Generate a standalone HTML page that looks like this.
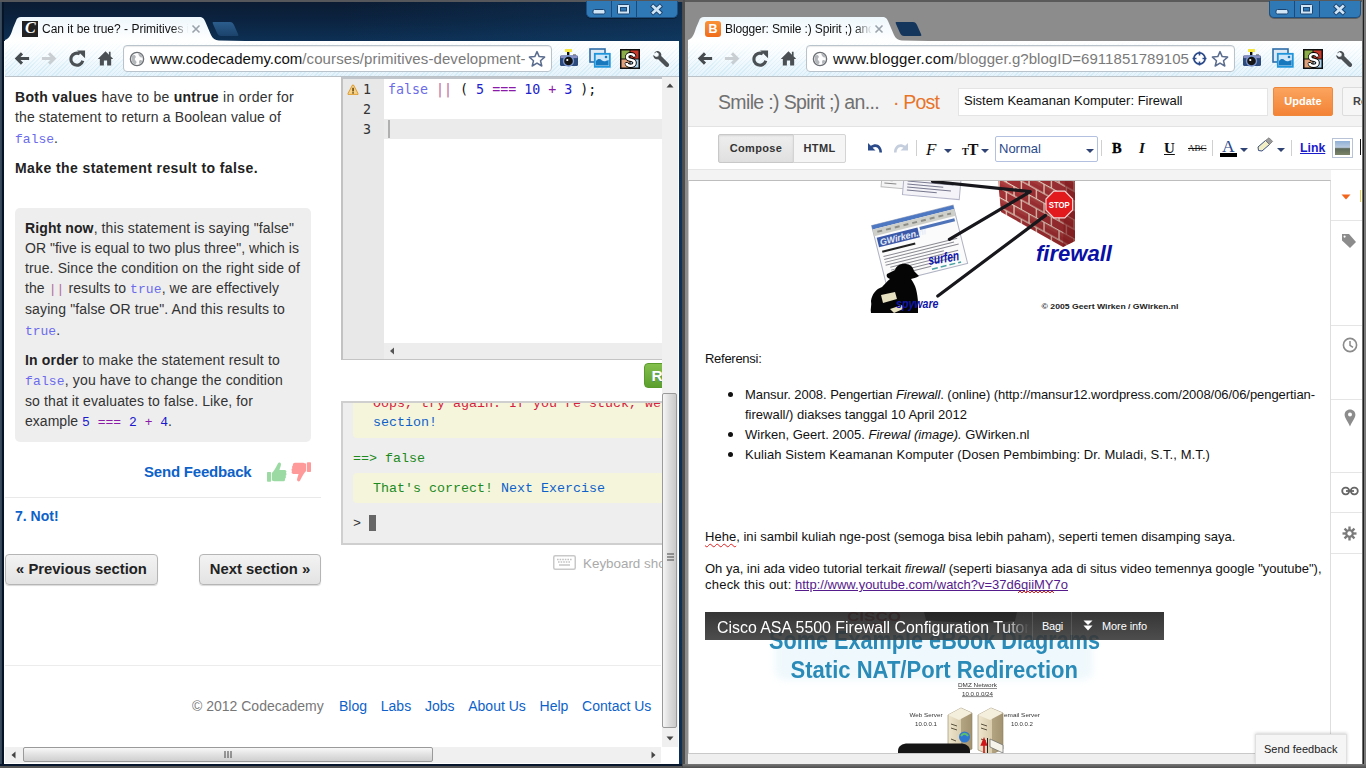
<!DOCTYPE html>
<html lang="en">
<head>
<meta charset="utf-8">
<title>Desktop</title>
<style>
*{box-sizing:border-box;margin:0;padding:0}
html,body{width:1366px;height:768px;overflow:hidden;background:#0b1f3c;font-family:"Liberation Sans",sans-serif;}
.abs{position:absolute}
.win{position:absolute;top:0;width:683px;height:768px;overflow:hidden}
#w1{left:0;background:#0b213f}
#w2{left:683px;background:#8a8a8a}
/* frame */
#w1 .frame{position:absolute;left:0;top:0;width:683px;height:768px;background:linear-gradient(90deg,rgba(20,70,115,0) 50%,rgba(20,70,115,.35) 100%),linear-gradient(#0b1b31 0,#0b2340 20px,#0d3054 41px,#0c2a4c 100px,#0b2444 100%);}
#w1 .frame:before{content:"";position:absolute;left:0;top:0;width:683px;height:2px;background:#55575a}
#w1 .edgeL{position:absolute;left:0;top:2px;width:4px;height:766px;background:linear-gradient(90deg,#46484b 0,#46484b 1.200px,#2a4a6c 1.200px,#1c3a5c 2.500px,#061428 2.500px)}
#w2 .frame{position:absolute;left:0;top:0;width:683px;height:768px;background:#8c8c8c}
#w2 .frame:before{content:"";position:absolute;left:0;top:0;width:683px;height:2px;background:#5a5a5a}
#w2 .edgeL{position:absolute;left:0;top:0;width:2px;height:768px;background:#4e4e4e}
#w2 .edgeR{position:absolute;left:679px;top:0;width:4px;height:768px;background:linear-gradient(90deg,#6e6e6e 0,#6e6e6e 1.5px,#1e1e1e 1.5px,#1e1e1e 2.5px,#7a7a7a 2.5px)}
#w2 .edgeB{position:absolute;left:0;top:764px;width:683px;height:5px;background:linear-gradient(#777 0,#444 100%)}
#w1 .edgeB{position:absolute;left:0;top:764px;width:683px;height:4px;background:linear-gradient(#061428 0,#0a1c34 2.500px,#555 2.500px)}
/* window controls */
.ctl{position:absolute;top:1px;left:586px;width:92px;height:17px;background:#2f79b7;border:1px solid #1d4f80;border-top:none;border-radius:0 0 5px 5px;box-shadow:0 1px 0 rgba(0,0,0,.3)}
.ctl i{position:absolute;top:0;width:1px;height:16px;background:#1c4a78}
.ctl i+b{}
.ctl svg{position:absolute;left:0;top:0}
/* tab strip */
.tab{position:absolute;left:5px;top:17px;width:214px;height:24px}
.tabtitle{position:absolute;left:42px;top:21px;font-size:12px;line-height:16px;color:#111;white-space:nowrap;width:146px;overflow:hidden;letter-spacing:0px;-webkit-mask-image:linear-gradient(90deg,#000 130px,transparent 147px);mask-image:linear-gradient(90deg,#000 130px,transparent 147px)}
.tabfade{display:none}
/* toolbar */
.tb{position:absolute;left:5px;top:41px;width:674px;height:36px;background:linear-gradient(#ffffff 0,#f8fcfe 40%,#e6f3fa 100%);border-bottom:1px solid #bcc3c8;overflow:hidden}
.stripes{position:absolute;left:0;top:0;width:100%;height:100%;background:repeating-linear-gradient(135deg,rgba(140,210,240,.2) 0,rgba(140,210,240,.2) 1px,rgba(255,255,255,0) 1px,rgba(255,255,255,0) 3px);-webkit-mask-image:linear-gradient(rgba(0,0,0,.05),#000 75%);}
.omni{position:absolute;left:118px;top:4px;width:429px;height:27px;background:#fff;border:1px solid #b9c3cb;border-radius:4px;box-shadow:inset 0 1px 1px rgba(0,0,0,.08)}
.url{position:absolute;left:26px;top:3px;font-size:15px;line-height:19px;white-space:nowrap;color:#111;overflow:hidden}
.url span{color:#7a7a7a}
.content{position:absolute;left:5px;top:77px;width:674px;height:686px;background:#fff;overflow:hidden}

/* ---- codecademy page ---- */
#c1{font-size:14px;line-height:20px;color:#333}
.l{position:absolute;white-space:nowrap;line-height:20px}
#bedit .l{line-height:16px;font-size:13px;color:#111}
#c1 b{color:#222}
#c1 code{font-family:"Liberation Mono",monospace;font-size:13px;color:#6b6bec}
#c1 code.op{color:#b06a9a}
#c1 code.num{color:#1a1acc}
#c1 code.eq{color:#8a1aa8}
a.lk{color:#0d62c9;text-decoration:none}
.hint{position:absolute;left:10px;top:131px;width:296px;height:234px;background:#eee;border-radius:5px}
.btn{position:absolute;top:477px;height:31px;border:1px solid #b5b5b5;border-radius:4px;background:linear-gradient(#f3f3f3,#e3e3e3);font-weight:bold;font-size:14.8px;line-height:29px;color:#222;text-align:center;box-shadow:0 1px 1px rgba(0,0,0,.15)}
.vsb{position:absolute;left:657px;top:0;width:16px;height:670px;background:#f0f0f0}
.vthumb{position:absolute;left:0;top:316px;width:15px;height:335px;border:1px solid #9a9a9a;border-radius:2px;background:linear-gradient(90deg,#f6f6f6 0,#dcdcdc 50%,#c9c9c9 100%)}
.hsb{position:absolute;left:0;top:670px;width:656px;height:16px;background:#f0f0f0}
.hthumb{position:absolute;left:18px;top:0;width:410px;height:15px;border:1px solid #9a9a9a;border-radius:2px;background:linear-gradient(#f8f8f8 0,#e2e2e2 50%,#cfcfcf 100%)}
/* editor */
.ed{position:absolute;left:336px;top:0;width:331px;height:283px;border:1px solid #c4c4c4;border-left:2px solid #c2c2c2;border-top:2px solid #bfc5ca;background:#fff;font-family:"DejaVu Sans Mono",monospace;font-size:13.3px;line-height:20px}
.gut{position:absolute;left:0;top:0;width:41px;height:280px;background:#e8e8e8}
.ln{position:absolute;left:0;width:28px;text-align:right;color:#333;font-size:13.3px}
.cons{position:absolute;left:336px;top:324px;width:330px;height:144px;border:2px solid #cfcfcf;background:#eee;font-family:"Liberation Mono",monospace;font-size:13.33px;line-height:20px;overflow:hidden}
.cbox{position:absolute;left:10px;width:330px;background:#f5f5dc;border-radius:4px}

/* ---- blogger page ---- */
#c2{background:#fff;font-size:13px;color:#222}
.bhead{position:absolute;left:0;top:0;width:674px;height:50px;background:#f3f3f3;border-bottom:1px solid #e3e3e3}
.btool{position:absolute;left:0;top:50px;width:674px;height:43px;background:#fff;border-bottom:1px solid #e5e5e5}
.bgap{position:absolute;left:0;top:93px;width:643px;height:11px;background:#f3f3f3}
.bedit{position:absolute;left:0;top:103px;width:643px;height:574px;background:#fff;border:1px solid #c9c9c9;border-right-color:#dedede;border-top-color:#bdbdbd;overflow:hidden}
.bedit>.in{position:absolute;left:-1px;top:0;width:0;height:0}
.bfoot{position:absolute;left:0;top:677px;width:644px;height:10px;background:#efefef}
.bside{position:absolute;left:644px;top:93px;width:30px;height:594px;background:#fff}
.bside hr{position:absolute;left:-1px;width:31px;height:1px;border:0;background:#e5e5e5}
.tbtn{position:absolute;top:57px;height:29px;border:1px solid #d4d4d4;letter-spacing:.35px;font-weight:bold;font-size:11px;line-height:27px;color:#333;text-align:center}
.sep{position:absolute;top:63px;width:1px;height:16px;background:#d0d0d0}
.dd{position:absolute;top:72px;width:0;height:0;border-left:4px solid transparent;border-right:4px solid transparent;border-top:4px solid #2f4474}
.t{position:absolute;white-space:nowrap;line-height:16px;color:#222}
</style>
</head>
<body>
<svg width="0" height="0" style="position:absolute">
 <defs>
  <symbol id="i-back" viewBox="0 0 18 16"><path d="M0.800 8 L7.800 1 L10.200 3.400 L7.300 6.300 L17 6.300 L17 9.700 L7.300 9.700 L10.200 12.600 L7.800 15 Z"/></symbol>
  <symbol id="i-reload" viewBox="0 0 20 18"><path d="M15.600 11.400 A6.400 6.400 0 1 1 12.400 4" fill="none" stroke-width="3.300"/><path d="M9.600 0.400 L18 0.400 L18 8.800 Z" stroke="none"/></symbol>
  <symbol id="i-home" viewBox="0 0 18 18"><path d="M9 1.2 L0.8 9.6 L3 9.6 L3 16.5 L7.3 16.5 L7.3 11.2 L10.7 11.2 L10.7 16.5 L15 16.5 L15 9.6 L17.2 9.6 L14.4 6.7 L14.4 1.8 L12.6 1.8 L12.6 4.9 Z"/></symbol>
  <symbol id="i-globe" viewBox="0 0 16 16"><circle cx="8" cy="8" r="6.6" fill="#fdfdfd" stroke="#6c7075" stroke-width="1.4"/><path d="M3.2 4.5 C5 3.5 6.5 4 6.8 5.5 C7 7 5.5 7.2 5.8 8.6 C6.2 10 7.8 10 7.5 11.8 C7.2 13 6 13.6 5 13 C3.2 11.8 2 9 3.2 4.5Z M9.5 2.2 C11.5 2.6 13.2 4 13.8 6 C12.8 6.8 11.2 6.5 10.6 5.4 C10 4.3 9 3.6 9.5 2.2Z M10.4 9.4 C11.5 8.8 12.8 9.2 13.4 10.2 C12.8 11.6 11.8 12.6 10.6 13.2 C10 12 9.8 10.4 10.4 9.4Z" fill="#b4b7ba"/></symbol>
  <symbol id="i-star" viewBox="0 0 18 18"><path d="M9 1.6 L11.2 6.6 L16.6 7.1 L12.5 10.7 L13.8 16 L9 13.1 L4.2 16 L5.5 10.7 L1.4 7.1 L6.8 6.6 Z" fill="#fff" stroke="#5b6d8e" stroke-width="1.5" stroke-linejoin="round"/></symbol>
  <symbol id="i-cam" viewBox="0 0 20 18"><rect x="6" y="0" width="7" height="3" fill="#f7e640"/><rect x="8" y="3" width="2.400" height="3.500" fill="#111"/><rect x="14" y="5" width="3" height="2.500" fill="#9a9a9a"/><rect x="1" y="6.500" width="18" height="10.500" rx="1.500" fill="#2c4a7c"/><rect x="1.500" y="6.500" width="17" height="2.600" fill="#8a8fc4"/><circle cx="9.500" cy="12" r="5.700" fill="#7b96cf"/><circle cx="9.500" cy="12" r="4.300" fill="#141414"/><circle cx="8.300" cy="11" r="1.100" fill="#fff"/></symbol>
  <symbol id="i-pic" viewBox="0 0 22 20"><rect x="1" y="1" width="15" height="13" fill="#dfe9f3" stroke="#2d6da8" stroke-width="1.6"/><rect x="5.8" y="5.8" width="15" height="13" fill="#cfe7f8" stroke="#1f95dc" stroke-width="1.8"/><path d="M7 17.6 L7 13 C9 10.5 11 10.5 13 12.5 C15 14 17 13 19.6 12 L19.6 17.6Z" fill="#1878bd"/><circle cx="17" cy="9" r="1.3" fill="#1878bd"/></symbol>
  <symbol id="i-s" viewBox="0 0 20 20"><rect x="0" y="0" width="20" height="20" fill="#111"/><rect x="1.5" y="1.5" width="8" height="8" fill="#8cae4a"/><rect x="10.5" y="1.5" width="8" height="8" fill="#c9392b"/><rect x="1.5" y="10.5" width="8" height="8" fill="#e0a27a"/><rect x="10.5" y="10.5" width="8" height="8" fill="#a9d2ec"/><rect x="6" y="16" width="5" height="2" fill="#f5e21a"/></symbol>
  <symbol id="i-wrench" viewBox="0 0 18 18"><path d="M2.2 3.6 C2.6 1.8 4.6 0.6 6.6 1.2 C8.8 1.9 9.8 4 9.2 6 L16.4 13.2 C17.4 14.2 17.2 15.6 16.4 16.4 C15.6 17.2 14.2 17.2 13.3 16.3 L6.2 9.2 C4.4 9.8 2.4 8.8 1.6 7 C1.3 6.2 1.3 5.6 1.4 5 L4 7 L6.4 6.2 L6.8 3.8 L4.4 1.9 Z"/></symbol>
 </defs>
</svg>
<!-- ================= LEFT WINDOW ================= -->
<div class="win" id="w1">
 <div class="frame"></div><div class="edgeL"></div><div class="edgeB"></div><div class="abs" style="left:682px;top:2px;width:1px;height:766px;background:#4a4a4a"></div>
 <div class="ctl">
  <i style="left:24px"></i><i style="left:49px"></i>
  <svg width="92" height="17" viewBox="0 0 92 17"><rect x="6" y="8.500" width="12" height="4.500" rx="1.500" fill="#cfe4f5" stroke="#1b4470" stroke-width="1"/><rect x="30.500" y="3.500" width="12" height="9.500" rx="1" fill="#cfe4f5" stroke="#1b4470" stroke-width="1"/><rect x="33.500" y="6.500" width="6" height="3.500" fill="#2f79b7" stroke="#1b4470" stroke-width="1"/><path d="M64.500 4 L74.500 13 M74.500 4 L64.500 13" stroke="#1b4470" stroke-width="4.600"/><path d="M65.200 4.600 L73.800 12.400 M73.800 4.600 L65.200 12.400" stroke="#cfe4f5" stroke-width="2.700"/></svg>
 </div>
 <svg class="abs" style="left:5px;top:16px" width="240" height="25" viewBox="0 0 240 25">
  <defs><linearGradient id="tg1" x1="0" y1="0" x2="0" y2="1"><stop offset="0" stop-color="#eef7fc"/><stop offset="1" stop-color="#ffffff"/></linearGradient>
  <linearGradient id="nt1" x1="0" y1="0" x2="0" y2="1"><stop offset="0" stop-color="#2b5d8c"/><stop offset="1" stop-color="#1b426b"/></linearGradient></defs>
  <path d="M0 25 L0 24 C5 22 6 18 8 12 L11 5 C12 2 13 1 16 1 L194 1 C198 1 199 3 200 5 L206 19 C208 23 210 24 214 24.5 L240 25 Z" fill="url(#tg1)"/>
  <path d="M209 6 L225 6 C227 6 228 7 229 9 L233 18 C234 20 233 20 231 20 L216 20 C214 20 213 19 212 17 L208 8 C207 6 208 6 209 6Z" fill="url(#nt1)"/>
 </svg>
 <div class="abs" style="left:22px;top:21px;width:16px;height:16px;background:#222"><span class="abs" style="left:3px;top:-2px;font:italic bold 16px/18px 'Liberation Serif',serif;color:#fff">C</span></div>
 <div class="tabtitle">Can it be true? - Primitives in</div>
 <div class="tabfade"></div>
 <svg class="abs" style="left:191px;top:24px" width="10" height="10" viewBox="0 0 10 10"><path d="M1.5 1.5l7 7m0-7l-7 7" stroke="#9aa3ab" stroke-width="1.6"/></svg>
 <div class="tb"><div class="stripes"></div>
  <div class="omni"><div class="url" style="width:375px">www.codecademy.com<span style="letter-spacing:.1px">/courses/primitives-development-course</span></div></div>
 </div>
 <svg class="abs" style="left:14px;top:51px" width="16" height="15" fill="#464b50"><use href="#i-back"/></svg>
 <svg class="abs" style="left:41px;top:51px;transform:scaleX(-1)" width="16" height="15" fill="#c9ced2"><use href="#i-back"/></svg>
 <svg class="abs" style="left:68px;top:50px" width="19" height="17" fill="#4b5055" stroke="#4b5055"><use href="#i-reload"/></svg>
 <svg class="abs" style="left:97px;top:50px" width="17" height="17" fill="#4b5055"><use href="#i-home"/></svg>
 <svg class="abs" style="left:129px;top:51px" width="16" height="16"><use href="#i-globe"/></svg>
 <svg class="abs" style="left:528px;top:50px" width="18" height="18"><use href="#i-star"/></svg>
 <svg class="abs" style="left:559px;top:49px" width="20" height="18"><use href="#i-cam"/></svg>
 <svg class="abs" style="left:589px;top:48px" width="22" height="20"><use href="#i-pic"/></svg>
 <svg class="abs" style="left:620px;top:49px" width="20" height="20"><use href="#i-s"/></svg>
 <div class="abs" style="left:623.5px;top:48.5px;font:bold 20px/22px 'Liberation Sans',sans-serif;color:#fff;transform:scaleX(.88);text-shadow:-1px 0 #000,1px 0 #000,0 1px #000,0 -1px #000">S</div>
 <svg class="abs" style="left:652px;top:50px" width="18" height="18" fill="#4b5055"><use href="#i-wrench"/></svg>
<div class="abs" style="left:4px;top:41px;width:1px;height:723px;background:#fdfdfd"></div>
 <div class="content" id="c1" style="height:687px">
  <div class="l" id="a1" style="left:10px;top:10px;--w:279px;letter-spacing:0.269px"><b>Both values</b> have to be <b>untrue</b> in order for</div>
  <div class="l" id="a2" style="left:10px;top:30px;--w:266px;letter-spacing:0.125px">the statement to return a Boolean value of</div>
  <div class="l" id="a3" style="left:10px;top:51px;--w:43px;letter-spacing:0.016px"><code>false</code>.</div>
  <div class="l" id="a4" style="left:10px;top:81px;--w:243px;letter-spacing:0.407px"><b>Make the statement result to false.</b></div>
  <div class="hint"></div>
  <div class="l" id="h1" style="left:20px;top:141px;--w:269px;letter-spacing:0.108px"><b>Right now</b>, this statement is saying "false"</div>
  <div class="l" id="h2" style="left:20px;top:161px;--w:274px;letter-spacing:0.023px">OR "five is equal to two plus three", which is</div>
  <div class="l" id="h3" style="left:20px;top:181px;--w:275px;letter-spacing:0.124px">true. Since the condition on the right side of</div>
  <div class="l" id="h4" style="left:20px;top:201px;--w:254px;letter-spacing:0.084px">the <code class="op">||</code> results to <code>true</code>, we are effectively</div>
  <div class="l" id="h5" style="left:20px;top:222px;--w:260px;letter-spacing:0.115px">saying "false OR true". And this results to</div>
  <div class="l" id="h6" style="left:20px;top:243px;--w:35px;letter-spacing:-0.022px"><code>true</code>.</div>
  <div class="l" id="h7" style="left:20px;top:273px;--w:255px;letter-spacing:0.169px"><b>In order</b> to make the statement result to</div>
  <div class="l" id="h8" style="left:20px;top:293px;--w:258px;letter-spacing:0.146px"><code>false</code>, you have to change the condition</div>
  <div class="l" id="h9" style="left:20px;top:314px;--w:228px;letter-spacing:0.116px">so that it evaluates to false. Like, for</div>
  <div class="l" id="h10" style="left:20px;top:334px;--w:147px;letter-spacing:0.023px">example <code class="num" style="white-space:pre">5 <span style="color:#8a1aa8">===</span> 2 <span style="color:#8a1aa8">+</span> 4</code>.</div>
  <a class="lk l" id="sf" style="left:139px;top:385px;font-weight:bold;font-size:15px;--w:107.5px;letter-spacing:-0.196px">Send Feedback</a>
  <svg class="abs" style="left:262px;top:385px" width="20" height="20" viewBox="0 0 20.500 20"><path d="M0.800 10 L3.400 10 C3.900 10 4.200 10.300 4.200 10.800 L4.200 19.200 C4.200 19.700 3.900 20 3.400 20 L0.800 20 C0.300 20 0 19.700 0 19.200 L0 10.800 C0 10.300 0.300 10 0.800 10 Z M5 11 C7 9.200 8.500 6.300 10 3.500 L11.300 1 C12.300 -0.400 14.600 0.400 14.300 2.600 C14 4.600 13.100 6.100 12.800 8 L18 8 C20 8 20.400 10 19.400 10.800 C20.400 11.800 20 13.400 19 13.800 C19.800 15 19.400 16.400 18.400 16.800 C18.900 18.200 18 19.600 16.500 19.600 L9 19.600 C7.500 19.600 6.500 19 5 18.600 Z" fill="#9bdaa3"/></svg>
  <svg class="abs" style="left:286px;top:385px;transform:rotate(180deg)" width="20" height="20" viewBox="0 0 20.500 20"><path d="M0.800 10 L3.400 10 C3.900 10 4.200 10.300 4.200 10.800 L4.200 19.200 C4.200 19.700 3.900 20 3.400 20 L0.800 20 C0.300 20 0 19.700 0 19.200 L0 10.800 C0 10.300 0.300 10 0.800 10 Z M5 11 C7 9.200 8.500 6.300 10 3.500 L11.300 1 C12.300 -0.400 14.600 0.400 14.300 2.600 C14 4.600 13.100 6.100 12.800 8 L18 8 C20 8 20.400 10 19.400 10.800 C20.400 11.800 20 13.400 19 13.800 C19.800 15 19.400 16.400 18.400 16.800 C18.900 18.200 18 19.600 16.500 19.600 L9 19.600 C7.500 19.600 6.500 19 5 18.600 Z" fill="#ff9a9a"/></svg>
  <div class="abs" style="left:0;top:420px;width:316px;height:1px;background:#e9e9e9"></div>
  <a class="lk abs" style="left:10px;top:429px;font-weight:bold;font-size:14px">7. Not!</a>
  <div class="btn" style="left:0;width:153px">&laquo; Previous section</div>
  <div class="btn" style="left:194px;width:122px">Next section &raquo;</div>
  <div class="abs" style="left:0;top:588px;width:656px;height:1px;background:#ececec"></div>
  <div class="abs" style="left:187px;top:619px;font-size:14px;color:#777;white-space:nowrap;word-spacing:0">&copy; 2012 Codecademy</div>
  <div class="abs" style="left:334px;top:619px;font-size:14px;white-space:nowrap"><a class="lk">Blog</a><a class="lk" style="margin-left:13.75px">Labs</a><a class="lk" style="margin-left:13.75px">Jobs</a><a class="lk" style="margin-left:13.75px">About Us</a><a class="lk" style="margin-left:13.75px">Help</a><a class="lk" style="margin-left:13.75px">Contact Us</a></div>

  <!-- editor -->
  <div class="ed">
   <div class="gut"></div>
   <div class="abs" style="left:41px;top:40px;width:290px;height:20px;background:#ebebeb"></div>
   <div class="abs" style="left:45px;top:41px;width:2px;height:18px;background:#b0b0b0"></div>
   <svg class="abs" style="left:4px;top:5px" width="12" height="12" viewBox="0 0 12 12"><path d="M6 1.800 L10.200 9.800 L1.800 9.800 Z" fill="#f6d48a" stroke="#dd9a30" stroke-width="2.600" stroke-linejoin="round"/><path d="M6 1.800 L10.200 9.800 L1.800 9.800 Z" fill="#f6d48a" stroke="#f6d48a" stroke-width=".8" stroke-linejoin="round"/><rect x="5.3" y="3.8" width="1.5" height="3.6" fill="#5a3a08"/><rect x="5.3" y="8.2" width="1.5" height="1.4" fill="#5a3a08"/></svg>
   <div class="ln" style="top:1px">1</div><div class="ln" style="top:21px">2</div><div class="ln" style="top:41px">3</div>
   <div class="abs" style="left:45px;top:1px;white-space:pre;color:#111"><span style="color:#6b6be8">false</span> <span style="color:#c0689a">||</span> ( <span style="color:#2222cc">5</span> <span style="color:#8a1aa8">===</span> <span style="color:#2222cc">10</span> <span style="color:#8a1aa8">+</span> <span style="color:#2222cc">3</span> );</div>
   <div class="abs" style="left:41px;top:264px;width:290px;height:16px;background:#ededed"></div>
   <svg class="abs" style="left:46px;top:268px" width="6" height="8" viewBox="0 0 6 8"><path d="M5 0.5 L1 4 L5 7.5Z" fill="#555"/></svg>
  </div>
  <div class="abs" style="left:639px;top:286px;width:30px;height:25px;overflow:hidden;border-radius:4px;background:linear-gradient(#84bf4c,#5c9f2e);border:1px solid #5a9a2c"><span class="abs" style="left:6.500px;top:2px;font:bold 15.500px/20px 'Liberation Sans',sans-serif;color:#fff;text-shadow:0 1px 0 rgba(60,120,160,.5)">Run</span></div>
  <div class="cons">
   <div class="cbox" style="top:-10px;height:45px"></div>
   <div class="abs" style="left:30px;top:-9px;color:#d4213d;white-space:pre">Oops, try again. If you're stuck, we</div>
   <div class="abs" style="left:30px;top:10px;color:#0d62c9;white-space:pre">section!</div>
   <div class="abs" style="left:10px;top:46px;color:#1c8a1c;white-space:pre">==&gt; false</div>
   <div class="cbox" style="top:70px;height:30px"></div>
   <div class="abs" style="left:30px;top:76px;color:#1c8a1c;white-space:pre">That's correct! <span style="color:#0d62c9">Next Exercise</span></div>
   <div class="abs" style="left:10px;top:111px;color:#333;white-space:pre">&gt;</div>
   <div class="abs" style="left:26px;top:112px;width:7px;height:16px;background:#666"></div>
  </div>
  <svg class="abs" style="left:548px;top:478px" width="23" height="15" viewBox="0 0 23 15"><rect x="0.75" y="0.75" width="21.5" height="13.5" rx="1.5" fill="#fff" stroke="#c9c9c9" stroke-width="1.5"/><path d="M4 4.5h15M5 7h13" stroke="#c2c2c2" stroke-width="1.4" stroke-dasharray="1.6 1"/><path d="M6 10h11" stroke="#c2c2c2" stroke-width="1.4"/></svg>
  <div class="abs" style="left:578px;top:477px;font-size:13.4px;color:#aaa;white-space:nowrap">Keyboard shortcuts</div>

  <!-- scrollbars -->
  <div class="vsb"><svg class="abs" style="left:4px;top:6px" width="8" height="5" viewBox="0 0 8 5"><path d="M4 0.5 L7.5 4.5 L0.5 4.5Z" fill="#444"/></svg><div class="vthumb"><svg class="abs" style="left:4px;top:159px" width="7" height="8" viewBox="0 0 7 8"><path d="M0 1h7M0 4h7M0 7h7" stroke="#444" stroke-width="1"/></svg></div><svg class="abs" style="left:4px;top:659px" width="8" height="5" viewBox="0 0 8 5"><path d="M4 4.5 L7.5 0.5 L0.5 0.5Z" fill="#444"/></svg></div>
  <div class="hsb"><svg class="abs" style="left:6px;top:4px" width="5" height="8" viewBox="0 0 5 8"><path d="M0.5 4 L4.5 0.5 L4.5 7.5Z" fill="#444"/></svg><div class="hthumb"><svg class="abs" style="left:200px;top:3px" width="8" height="7" viewBox="0 0 8 7"><path d="M1 0v7M4 0v7M7 0v7" stroke="#444" stroke-width="1"/></svg></div><svg class="abs" style="left:646px;top:4px" width="5" height="8" viewBox="0 0 5 8"><path d="M4.5 4 L0.5 0.5 L0.5 7.5Z" fill="#444"/></svg></div>
  <div class="abs" style="left:656px;top:670px;width:18px;height:16px;background:#fff"></div>
  <div class="abs" style="left:673px;top:0;width:1px;height:686px;background:#fff"></div>
 </div>
</div>

<!-- ================= RIGHT WINDOW ================= -->
<div class="win" id="w2">
 <div class="frame"></div><div class="edgeL"></div><div class="edgeR"></div><div class="edgeB"></div>
 <div class="ctl" style="left:586px">
  <i style="left:24px"></i><i style="left:49px"></i>
  <svg width="92" height="17" viewBox="0 0 92 17"><rect x="6" y="8.500" width="12" height="4.500" rx="1.500" fill="#cfe4f5" stroke="#1b4470" stroke-width="1"/><rect x="30.500" y="3.500" width="12" height="9.500" rx="1" fill="#cfe4f5" stroke="#1b4470" stroke-width="1"/><rect x="33.500" y="6.500" width="6" height="3.500" fill="#2f79b7" stroke="#1b4470" stroke-width="1"/><path d="M64.500 4 L74.500 13 M74.500 4 L64.500 13" stroke="#1b4470" stroke-width="4.600"/><path d="M65.200 4.600 L73.800 12.400 M73.800 4.600 L65.200 12.400" stroke="#cfe4f5" stroke-width="2.700"/></svg>
 </div>
 <svg class="abs" style="left:5px;top:16px" width="240" height="25" viewBox="0 0 240 25">
  <path d="M0 25 L0 24 C5 22 6 18 8 12 L11 5 C12 2 13 1 16 1 L194 1 C198 1 199 3 200 5 L206 19 C208 23 210 24 214 24.5 L240 25 Z" fill="url(#tg1)"/>
  <path d="M209 6 L225 6 C227 6 228 7 229 9 L233 18 C234 20 233 20 231 20 L216 20 C214 20 213 19 212 17 L208 8 C207 6 208 6 209 6Z" fill="#15365c"/>
 </svg>
 <div class="abs" style="left:22px;top:21px;width:16px;height:16px;border-radius:3px;background:linear-gradient(#f9923a,#ef6c1a)"><span class="abs" style="left:3.5px;top:1px;font:bold 12.5px/14px 'Liberation Sans',sans-serif;color:#fff">B</span></div>
 <div class="tabtitle" style="letter-spacing:-.12px">Blogger: Smile :) Spirit ;) and</div>
 <div class="tabfade"></div>
 <svg class="abs" style="left:191px;top:24px" width="10" height="10" viewBox="0 0 10 10"><path d="M1.5 1.5l7 7m0-7l-7 7" stroke="#9aa3ab" stroke-width="1.6"/></svg>
 <div class="tb"><div class="stripes"></div>
  <div class="omni"><div class="url" style="width:356px"><b style="font-weight:normal;letter-spacing:.23px">www.blogger.com</b><span style="letter-spacing:.04px">/blogger.g?blogID=69118517891052</span></div><svg class="abs" style="left:385px;top:5px" width="15" height="15" viewBox="0 0 15 15"><circle cx="7.5" cy="7.5" r="5.6" fill="#fff" stroke="#2b4a8a" stroke-width="1.7"/><path d="M7.5 0.500v4M7.500 10.500v4M0.500 7.500h4M10.500 7.500h4" stroke="#2b4a8a" stroke-width="1.600"/></svg></div>
 </div>
 <svg class="abs" style="left:14px;top:51px" width="16" height="15" fill="#464b50"><use href="#i-back"/></svg>
 <svg class="abs" style="left:41px;top:51px;transform:scaleX(-1)" width="16" height="15" fill="#c9ced2"><use href="#i-back"/></svg>
 <svg class="abs" style="left:68px;top:50px" width="19" height="17" fill="#4b5055" stroke="#4b5055"><use href="#i-reload"/></svg>
 <svg class="abs" style="left:97px;top:50px" width="17" height="17" fill="#4b5055"><use href="#i-home"/></svg>
 <svg class="abs" style="left:129px;top:51px" width="16" height="16"><use href="#i-globe"/></svg>
 <svg class="abs" style="left:528px;top:50px" width="18" height="18"><use href="#i-star"/></svg>
 <svg class="abs" style="left:559px;top:49px" width="20" height="18"><use href="#i-cam"/></svg>
 <svg class="abs" style="left:589px;top:48px" width="22" height="20"><use href="#i-pic"/></svg>
 <svg class="abs" style="left:620px;top:49px" width="20" height="20"><use href="#i-s"/></svg>
 <div class="abs" style="left:623.5px;top:48.5px;font:bold 20px/22px 'Liberation Sans',sans-serif;color:#fff;transform:scaleX(.88);text-shadow:-1px 0 #000,1px 0 #000,0 1px #000,0 -1px #000">S</div>
 <svg class="abs" style="left:652px;top:50px" width="18" height="18" fill="#4b5055"><use href="#i-wrench"/></svg>
<div class="content" id="c2" style="height:687px">
  <div class="bhead"></div>
  <div class="l" id="b1" style="left:30px;top:10px;font-size:19.5px;line-height:30px;color:#707070;--w:161px;letter-spacing:-0.651px">Smile :) Spirit ;) an...</div>
  <div class="l" id="b2" style="left:205px;top:10px;font-size:19.5px;line-height:30px;color:#e8742a;--w:44px;letter-spacing:-0.800px">&middot; Post</div>
  <div class="abs" style="left:270px;top:11px;width:310px;height:28px;background:#fff;border:1px solid #e4e4e4"></div>
  <div class="l" id="b3" style="left:276px;top:14px;font-size:13px;line-height:20px;color:#111;--w:218.5px;letter-spacing:0.009px">Sistem Keamanan Komputer: Firewall</div>
  <div class="abs" style="left:585px;top:10px;width:60px;height:29px;border-radius:2px;border:1px solid #f0883c;background:linear-gradient(#fba45e,#f38336);color:#fff;font-weight:bold;font-size:11px;line-height:27px;text-align:center">Update</div>
  <div class="abs" style="left:654px;top:10px;width:30px;height:29px;border:1px solid #dcdcdc;border-radius:2px;background:#f6f6f6;color:#444;font-weight:bold;font-size:11px;line-height:27px;padding-left:10px">Re</div>
  <div class="btool"></div>
  <div class="tbtn" style="left:30px;width:76px;background:linear-gradient(#eeeeee,#e0e0e0);border-color:#c8c8c8;border-radius:2px 0 0 2px;box-shadow:inset 0 1px 2px rgba(0,0,0,.1)">Compose</div>
  <div class="tbtn" style="left:105px;width:53px;background:#f5f5f5;border-radius:0 2px 2px 0">HTML</div>
  <svg class="abs" style="left:179px;top:65px" width="16" height="12" viewBox="0 0 16 12"><path d="M1 1 L1 8.5 L8.5 8.5 L5.6 5.8 C7.8 4.2 11 4.6 12.2 8.6 L12.4 10.5 L15 10.5 C15 3 9 0 3.8 3.8 Z" fill="#2b4a8a"/></svg>
  <svg class="abs" style="left:205px;top:65px;transform:scaleX(-1)" width="16" height="12" viewBox="0 0 16 12"><path d="M1 1 L1 8.5 L8.5 8.5 L5.6 5.8 C7.8 4.2 11 4.6 12.2 8.6 L12.4 10.5 L15 10.5 C15 3 9 0 3.8 3.8 Z" fill="#c5cedd"/></svg>
  <div class="sep" style="left:228px"></div>
  <div class="abs" style="left:238px;top:60px;font:italic 17px/26px 'Liberation Serif',serif;color:#111">F</div>
  <div class="dd" style="left:256px"></div>
  <div class="abs" style="left:274px;top:61px;font:bold 16px/24px 'Liberation Serif',serif;color:#111;letter-spacing:-1px"><span style="font-size:10px">T</span>T</div>
  <div class="dd" style="left:293px"></div>
  <div class="abs" style="left:307px;top:59px;width:103px;height:26px;border:1px solid #b3c0e0;border-radius:2px;background:#fff"></div>
  <div class="t" style="left:311px;top:64px;font-size:13px;color:#2b4a8a">Normal</div>
  <div class="dd" style="left:398px"></div>
  <div class="sep" style="left:413px"></div>
  <div class="abs" style="left:424px;top:61px;font:bold 14.5px/20px 'Liberation Serif',serif;color:#000;-webkit-text-stroke:.3px #000">B</div>
  <div class="abs" style="left:451px;top:61px;font:italic bold 15px/20px 'Liberation Serif',serif;color:#111">I</div>
  <div class="abs" style="left:476px;top:61px;font:bold 15px/20px 'Liberation Serif',serif;color:#111;text-decoration:underline">U</div>
  <div class="abs" style="left:500px;top:63px;font:9px/16px 'Liberation Serif',serif;color:#111;text-decoration:line-through">ABC</div>
  <div class="sep" style="left:524px"></div>
  <div class="abs" style="left:534px;top:57px;font:17.5px/24px 'Liberation Serif',serif;color:#2b4a8a">A</div>
  <div class="abs" style="left:532px;top:76px;width:17px;height:4px;background:#000"></div>
  <div class="dd" style="left:552px;top:71px"></div>
  <svg class="abs" style="left:569px;top:60px" width="17" height="17" viewBox="0 0 17 17"><path d="M1 10 L8.5 3.5 L12.5 7.5 L5 14 L1.5 13.5 Z" fill="#f3efc4" stroke="#3a4f86" stroke-width="1"/><path d="M8.5 3.5 L12 0.8 L15.6 4.4 L12.5 7.5 Z" fill="#9a9a9a" stroke="#777" stroke-width=".8"/></svg>
  <div class="dd" style="left:589px;top:71px"></div>
  <div class="sep" style="left:603px"></div>
  <div class="abs" style="left:612px;top:62px;font-weight:bold;font-size:12.3px;line-height:18px;color:#1a1acd;text-decoration:underline">Link</div>
  <div class="abs" style="left:644px;top:61px;width:21px;height:20px;border:1px solid #b9c3d8;background:#fff;padding:2px"><div style="width:15px;height:14px;background:linear-gradient(#8fb0d6 0,#b9cbe0 45%,#5d6a5a 55%,#7b8468 100%)"></div></div>
  <div class="abs" style="left:671.5px;top:62px;width:1.500px;height:16px;background:#111"></div>
  <div class="bgap"></div>
  <div class="bedit" id="bedit"><div class="in">
   <!-- firewall illustration -->
   <svg class="abs" style="left:180px;top:0" width="320" height="140" viewBox="0 0 320 140" font-family="'Liberation Sans',sans-serif">
    <defs>
     <pattern id="brick" width="15" height="19" patternUnits="userSpaceOnUse" patternTransform="translate(130 -4) skewY(29)"><rect width="15" height="19" fill="#a63337"/><rect x="1" y="1" width="13" height="4" fill="#b54a48" opacity=".5"/><path d="M0 0.600h15M0 10.100h15M1 0v9.500M8.500 9.500v9.500" stroke="#f0dccb" stroke-width="1.300"/></pattern>
     <linearGradient id="wallsh" x1="0" y1="0" x2="1" y2="1"><stop offset="0" stop-color="#000" stop-opacity="0"/><stop offset="1" stop-color="#400" stop-opacity=".28"/></linearGradient>
    </defs>
    <!-- top screenshots -->
    <g transform="rotate(5 50 8)"><rect x="13" y="-8" width="23" height="17" fill="#f4f4f4" stroke="#bdbdbd"/><path d="M16 2h8M16 5h12" stroke="#888" stroke-width="1"/><rect x="35" y="-8" width="57" height="23" fill="#f3f3f8" stroke="#b4b4c8"/><path d="M39 -2h20M39 1h46M39 4h36M39 7h44M39 10h30" stroke="#77778e" stroke-width="1"/></g>
    <!-- surfen screenshot -->
    <g transform="translate(3.600 44.500) rotate(-14)"><rect x="0" y="0" width="84" height="60" fill="#fbfbfb" stroke="#aeb2c2"/><rect x="0" y="0" width="84" height="4" fill="#4f78c2"/><rect x="0" y="4" width="84" height="7" fill="#cfcfca"/><path d="M4 7.500h76" stroke="#8e8e88" stroke-width="2" stroke-dasharray="5 4"/><rect x="2" y="13" width="42" height="10" fill="#3b58a8"/><text x="4" y="21.500" font-size="9" font-weight="bold" font-style="italic" fill="#e8ecf8">GWirken.nl</text><rect x="46" y="13" width="36" height="3" fill="#4e73b8"/><path d="M4 28h34" stroke="#222" stroke-width="2"/><path d="M4 33h76M4 36h72M4 39h76M4 42h60M8 45h70M8 48h52M8 51h66M8 54h40" stroke="#8a8a92" stroke-width="1"/><path d="M48 57h30" stroke="#4aa0a0" stroke-width="1.500" stroke-dasharray="6 3"/></g>
    <text x="61" y="84" font-size="14" font-weight="bold" font-style="italic" fill="#1016a8" transform="rotate(-9 61 84)" textLength="31" lengthAdjust="spacingAndGlyphs">surfen</text>
    <!-- brick wall -->
    <path d="M130 0 L207 0 L207 60 L195 66 L133 31 Z" fill="url(#brick)"/>
    <path d="M130 0 L207 0 L207 60 L195 66 L133 31 Z" fill="url(#wallsh)"/>
    <path d="M197 0 L207 0 L207 60 L195 66 Z" fill="#7a1a1e" opacity=".55"/>
    <!-- cables -->
    <path d="M64.500 0.500 L162.300 10.700 L81.400 58.300" fill="none" stroke="#17171c" stroke-width="3.200" stroke-linecap="round" stroke-linejoin="round"/>
    <path d="M69.800 115 L177.500 34.400" stroke="#17171c" stroke-width="3.200" stroke-linecap="round"/>
    <!-- stop sign -->
    <path d="M204.6 29.0 L196.8 36.8 L185.8 36.8 L178.0 29.0 L178.0 18.0 L185.8 10.2 L196.8 10.2 L204.6 18.0 Z" fill="#e21a1d" stroke="#f6d5d5" stroke-width="1.200"/>
    <text x="191.300" y="26.800" font-size="9.500" font-weight="bold" fill="#fff" text-anchor="middle" textLength="21" lengthAdjust="spacingAndGlyphs">STOP</text>
    <!-- spy -->
    <path d="M27 89 C28 85 33 82 38 83 C42 83 45 86 46 90 L51 95 C48 97 45 97 43 98 C45 101 47 104 48 108 C49 112 50 118 50 122 L50 132 L3 132 C2 128 4 124 3 120 C4 113 8 108 14 106 C17 103 19 100 22 98 C19 97 18 95 19 93 Z" fill="#050505"/>
    <path d="M13 114 L27 111 L29 118 L15 122 Z" fill="#e6dfc0"/><path d="M22 128 L34 124 L35 128 L26 132 Z" fill="#e6dfc0"/>
    <text x="28" y="126.600" font-size="12" font-weight="bold" font-style="italic" fill="#1016a8" textLength="42.500" lengthAdjust="spacingAndGlyphs">spyware</text>
    <text x="168" y="79.500" font-size="22" font-weight="bold" font-style="italic" fill="#0a10a4" textLength="76" lengthAdjust="spacingAndGlyphs">firewall</text>
    <text x="173.600" y="128" font-size="8" font-weight="bold" fill="#222" textLength="136.800" lengthAdjust="spacingAndGlyphs">&#169; 2005 Geert Wirken / GWirken.nl</text>
   </svg>
   <!-- text -->
   <div class="l" id="e1" style="left:17px;top:170px;--w:56.5px;letter-spacing:-0.275px">Referensi:</div>
   <div class="abs" style="left:40px;top:211px;width:5px;height:5px;border-radius:3px;background:#111"></div>
   <div class="l" id="e2" style="left:57px;top:206px;--w:570px;letter-spacing:-0.061px">Mansur. 2008. Pengertian <i>Firewall</i>. (online) (http://mansur12.wordpress.com/2008/06/06/pengertian-</div>
   <div class="l" id="e3" style="left:57px;top:226px;--w:222px;letter-spacing:0.004px">firewall/) diakses tanggal 10 April 2012</div>
   <div class="abs" style="left:40px;top:251px;width:5px;height:5px;border-radius:3px;background:#111"></div>
   <div class="l" id="e4" style="left:57px;top:246px;--w:284.5px;letter-spacing:-0.003px">Wirken, Geert. 2005. <i>Firewal (image).</i> GWirken.nl</div>
   <div class="abs" style="left:40px;top:271px;width:5px;height:5px;border-radius:3px;background:#111"></div>
   <div class="l" id="e5" style="left:57px;top:266px;--w:465px;letter-spacing:0.084px">Kuliah Sistem Keamanan Komputer (Dosen Pembimbing: Dr. Muladi, S.T., M.T.)</div>
   <div class="l" id="e6" style="left:17px;top:348px;--w:530.5px;letter-spacing:0.025px"><span style="text-decoration:underline wavy #e02020 1px;text-underline-offset:2px">Hehe</span>, ini sambil kuliah nge-post (semoga bisa lebih paham), seperti temen disamping saya.</div>
   <div class="l" id="e7" style="left:17px;top:380px;--w:616.5px;letter-spacing:-0.011px">Oh ya, ini ada video tutorial terkait <i>firewall</i> (seperti biasanya ada di situs video temennya google "youtube"),</div>
   <div class="l" id="e8" style="left:17px;top:396px;--w:86.5px;letter-spacing:0.226px">check this out:</div>
   <div class="l" id="e8b" style="left:107px;top:396px;color:#551a8b;text-decoration:underline;--w:273px;letter-spacing:0.005px">http://www.youtube.com/watch?v=37d6qiiMY7o</div>
   <svg class="abs" style="left:330px;top:409px" width="38" height="4" viewBox="0 0 38 4"><path d="M0 3 L2 1 L4 3 L6 1 L8 3 L10 1 L12 3 L14 1 L16 3 L18 1 L20 3 L22 1 L24 3 L26 1 L28 3 L30 1 L32 3 L34 1 L36 3" fill="none" stroke="#e02020" stroke-width="1"/></svg>
   <!-- video -->
   <div class="abs" id="vid" style="left:17px;top:431px;width:459px;height:143px;background:#fff;overflow:hidden">
    <svg class="abs" style="left:0;top:0" width="459" height="143" viewBox="0 0 459 143" font-family="'Liberation Sans',sans-serif">
     <defs><filter id="soft" x="-5%" y="-20%" width="110%" height="140%"><feGaussianBlur stdDeviation=".55"/></filter>
      <linearGradient id="srv" x1="0" y1="0" x2="1" y2="0"><stop offset="0" stop-color="#efe6cf"/><stop offset=".55" stop-color="#d9cdae"/><stop offset=".56" stop-color="#b3a482"/><stop offset="1" stop-color="#a39370"/></linearGradient></defs>
     <text x="142" y="9" font-size="13" font-weight="bold" fill="#b5202a" filter="url(#soft)" textLength="54" lengthAdjust="spacingAndGlyphs">CISCO</text>
     <text x="160" y="19" font-size="10" font-weight="bold" fill="#b5202a" filter="url(#soft)">ASA</text>
     <path d="M219 0 L312 0 L310 9 C280 12 250 11 221 8 Z" fill="#1c1c1c" filter="url(#soft)"/>
     <filter id="halo" x="-10%" y="-30%" width="120%" height="160%"><feGaussianBlur stdDeviation="3.5"/></filter><rect x="70" y="22" width="318" height="46" rx="10" fill="#cfeaf6" opacity=".32" filter="url(#halo)"/>
     <g filter="url(#soft)" fill="#2b8bb8" font-weight="bold">
      
      <text x="64" y="37" font-size="25" textLength="331" lengthAdjust="spacingAndGlyphs">Some Example eBook Diagrams</text>
      <text x="85.500" y="65.500" font-size="23.500" textLength="287.500" lengthAdjust="spacingAndGlyphs">Static NAT/Port Redirection</text>
     </g>
     <g font-size="5.500" fill="#333" text-anchor="middle" filter="url(#soft)">
      <text x="272.500" y="75" text-decoration="underline" textLength="39" lengthAdjust="spacingAndGlyphs">DMZ Network</text>
      <text x="272.500" y="83.500" text-decoration="underline" textLength="31" lengthAdjust="spacingAndGlyphs">10.0.0.0/24</text>
      <text x="221" y="105" textLength="33" lengthAdjust="spacingAndGlyphs">Web Server</text>
      <text x="221" y="113.500" textLength="22" lengthAdjust="spacingAndGlyphs">10.0.0.1</text>
      <text x="317" y="105" textLength="36" lengthAdjust="spacingAndGlyphs">email Server</text>
      <text x="317" y="113.500" textLength="22" lengthAdjust="spacingAndGlyphs">10.0.0.2</text>
     </g>
     <g filter="url(#soft)">
      <path d="M243 103 L256 96 L267 101 L267 137 L254 143 L243 138 Z" fill="url(#srv)" stroke="#8d7f5f" stroke-width=".6"/>
      <path d="M243 103 L256 96 L267 101 L254 108 Z" fill="#f4eedd"/>
      <path d="M246 112l6 2M246 116l6 2M246 127l5 2" stroke="#5b533f" stroke-width="1"/>
      <path d="M273 103 L286 96 L298 101 L298 137 L285 143 L273 138 Z" fill="url(#srv)" stroke="#8d7f5f" stroke-width=".6"/>
      <path d="M273 103 L286 96 L298 101 L285 108 Z" fill="#f4eedd"/>
      <path d="M276 112l6 2M276 116l6 2M276 127l5 2" stroke="#5b533f" stroke-width="1"/>
      <circle cx="259.500" cy="125" r="5.500" fill="#2f78d0"/><path d="M256 124c2-3 5-3 7 0" stroke="#5fc06a" stroke-width="2" fill="none"/>
      <path d="M285 127 L298 133 L298 141 L285 135 Z" fill="#f5f3ea" stroke="#666" stroke-width=".7"/>
      <path d="M279 143 L279 130 M276.500 133 L279 127 L281.500 133 Z" stroke="#d01818" stroke-width="1.600" fill="#d01818"/>
      <path d="M282.500 143 L282.500 126" stroke="#222" stroke-width="1"/>
     </g>
     <path d="M193 143 L193 139 C193 134 197 131.500 203 131.500 L255 131.500 C261 131.500 265 134 265 139 L265 143 Z" fill="#151515"/>
    </svg>
    <div class="abs" style="left:0;top:0;width:459px;height:28px;background:linear-gradient(rgba(38,38,38,.93),rgba(58,58,58,.9))"></div>
    <div class="abs" style="left:327px;top:0;width:1px;height:28px;background:rgba(255,255,255,.12)"></div>
    <div class="abs" style="left:366px;top:0;width:1px;height:28px;background:rgba(255,255,255,.12)"></div>
    <div class="l" id="v1" style="left:12px;top:6px;font-size:15.9px;line-height:20px;color:#fff;width:312px;overflow:hidden;-webkit-mask-image:linear-gradient(90deg,#000 285px,transparent 312px)">Cisco ASA 5500 Firewall Configuration Tutorial</div>
    <div class="l" id="v2" style="left:337px;top:6px;font-size:11px;line-height:16px;color:#fff;--w:21px;letter-spacing:-0.258px">Bagi</div>
    <svg class="abs" style="left:378px;top:8px" width="10" height="11" viewBox="0 0 10 11"><path d="M0.500 0.500 L9.500 0.500 L5 5 Z M0.500 5.500 L9.500 5.500 L5 10.500 Z" fill="#fff"/></svg>
    <div class="l" id="v3" style="left:397px;top:6px;font-size:11px;line-height:16px;color:#fff;--w:45px;letter-spacing:-0.095px">More info</div>
   </div>
  </div></div>
  <div class="bside">
   <svg class="abs" style="left:9px;top:24px" width="10" height="6" viewBox="0 0 10 6"><path d="M0.5 0.5 L9.5 0.5 L5 5.5Z" fill="#f2641a"/></svg>
   <div class="abs" style="left:28px;top:20px;width:1px;height:12px;background:#f0d040"></div>
   <hr style="top:50px">
   <svg class="abs" style="left:9px;top:63px" width="16" height="16" viewBox="0 0 16 16"><path d="M1 1 L8 1 L15 9 L9 15 L1 7.5 Z" fill="#8c8c8c"/><circle cx="3.6" cy="3.6" r="1.1" fill="#fff"/></svg>
   <hr style="top:155px">
   <svg class="abs" style="left:10px;top:167px" width="16" height="16" viewBox="0 0 16 16"><circle cx="8" cy="8" r="6.6" fill="none" stroke="#8a8a8a" stroke-width="1.6"/><path d="M8 4 L8 8.4 L11 10.4" fill="none" stroke="#8a8a8a" stroke-width="1.5"/></svg>
   <hr style="top:229px">
   <svg class="abs" style="left:12px;top:239px" width="12" height="18" viewBox="0 0 12 18"><path d="M6 0.5 C9.2 0.5 11.4 2.8 11.4 5.8 C11.4 9 8 12.5 6 17.5 C4 12.5 0.6 9 0.6 5.8 C0.6 2.8 2.8 0.5 6 0.5Z" fill="#8c8c8c"/><circle cx="6" cy="5.6" r="2" fill="#fff"/></svg>
   <hr style="top:302px">
   <svg class="abs" style="left:9px;top:316px" width="18" height="10" viewBox="0 0 18 10"><rect x="1.2" y="1.7" width="7" height="6.6" rx="3.3" fill="none" stroke="#666" stroke-width="1.8"/><rect x="9.8" y="1.7" width="7" height="6.6" rx="3.3" fill="none" stroke="#666" stroke-width="1.8"/><path d="M5 5h8" stroke="#666" stroke-width="1.8"/></svg>
   <hr style="top:342px">
   <svg class="abs" style="left:9.500px;top:355.500px" width="15" height="15" viewBox="0 0 18 18"><g fill="#7a7a7a"><circle cx="9" cy="9" r="5.2"/><g id="gt"><rect x="7.6" y="0.6" width="2.8" height="16.8"/></g><use href="#gt" transform="rotate(45 9 9)"/><use href="#gt" transform="rotate(90 9 9)"/><use href="#gt" transform="rotate(135 9 9)"/></g><circle cx="9" cy="9" r="2.6" fill="#fff"/></svg>
   <hr style="top:383px">
  </div>
  <div class="bfoot"></div>
  <div class="abs" style="left:567px;top:657px;width:92px;height:30px;background:#f5f5f5;border:1px solid #e0e0e0;border-bottom:none;box-shadow:0 -1px 3px rgba(0,0,0,.18)"></div>
  <div class="l" id="b9" style="left:576px;top:664px;font-size:11px;line-height:16px;color:#222;--w:73.5px;letter-spacing:0.008px">Send feedback</div>
 </div>
</div>
</body>
</html>
